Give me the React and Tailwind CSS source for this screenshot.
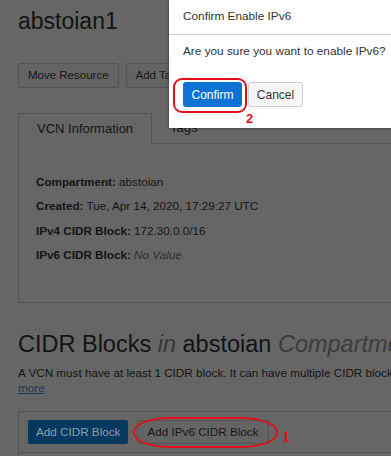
export default function App() {
  const font = "font-['Liberation_Sans',Arial,Helvetica,sans-serif]";
  const btn = "h-[25px] px-[9px] border border-[#535353] rounded-[2px] bg-[#646464] text-[11.5px] text-[#161616]";
  return (
    <div className={`relative w-[391px] h-[456px] overflow-hidden bg-[#666666] text-[#151515] ${font}`}>
      {/* Page, dimmed behind the dialog */}
      <div className="w-[640px] px-[18px]">
        <h1 className="pt-[7px] text-[23px] leading-[28px] font-normal text-[#131313]">abstoian1</h1>

        <div className="mt-[28px] flex gap-[7px]">
          <button className={btn}>Move Resource</button>
          <button className={btn}>Add Tags</button>
          <button className={btn}>Terminate</button>
        </div>

        {/* Tabs */}
        <div className="mt-[25px] flex">
          <div className="h-[31px] px-[18px] flex items-center border border-b-0 border-[#535353] text-[13px]">
            VCN Information
          </div>
          <div className="flex-1 flex border-b border-[#535353]">
            <div className="h-[30px] px-[18px] flex items-center text-[13px]">Tags</div>
          </div>
        </div>
        <div className="border border-t-0 border-[#535353] pt-[26px] pb-[35px] px-[17px] text-[11.7px] leading-[24.3px]">
          <div><b>Compartment:</b> abstoian</div>
          <div><b>Created:</b> Tue, Apr 14, 2020, 17:29:27 UTC</div>
          <div><b>IPv4 CIDR Block:</b> 172.30.0.0/16</div>
          <div><b>IPv6 CIDR Block:</b> <i className="text-[#2e2e2e]">No Value</i></div>
        </div>

        <h2 className="mt-[27px] text-[23.5px] leading-[28px] font-normal whitespace-nowrap text-[#131313]">
          CIDR Blocks <i className="text-[#363636]">in</i> abstoian <i className="text-[#3c3c3c]">Compartment</i>
        </h2>
        <p className="mt-[7px] w-[436px] text-[11.7px] leading-[15px]">
          A VCN must have at least 1 CIDR block. It can have multiple CIDR blocks. Learn{" "}
          <a className="underline text-[#1d3a55]">more</a>
        </p>

        <div className="mt-[16px] border border-[#535353]">
          <div className="flex gap-[9px] px-[9px] py-[8px] border-b border-[#535353]">
            <button className="h-[24px] px-[8px] rounded-[2px] bg-[#053960] text-[#909eab] text-[11.7px]">
              Add CIDR Block
            </button>
            <button className="h-[24px] px-[9px] border border-[#535353] rounded-[2px] bg-[#646464] text-[11.7px] text-[#161616]">
              Add IPv6 CIDR Block
            </button>
          </div>
          <div className="h-[40px]"></div>
        </div>
      </div>

      {/* Modal */}
      <div className="absolute left-[169px] top-0 w-[300px] bg-white shadow-[0_0_3px_rgba(0,0,0,0.5)] text-[#333]">
        <div className="h-[35px] flex items-center px-[14px] border-b border-[#cfcfcf] text-[11.8px]">
          Confirm Enable IPv6
        </div>
        <div className="px-[14px] pt-[8px] pb-[21px]">
          <p className="text-[11.8px] leading-[16px]">Are you sure you want to enable IPv6?</p>
          <div className="mt-[23px] flex gap-[6px]">
            <button className="h-[25px] w-[59px] rounded-[3px] bg-[#0d72d3] text-white text-[12px]">
              Confirm
            </button>
            <button className="h-[25px] w-[55px] rounded-[3px] border border-[#cdcdcd] bg-[#f6f6f6] text-[12px] text-[#333]">
              Cancel
            </button>
          </div>
        </div>
      </div>

      {/* Annotations */}
      <div className="absolute left-[173px] top-[78px] w-[74px] h-[35px] rounded-[9px] border-2 border-[#e3101b]"></div>
      <div className="absolute left-[246px] top-[111px] text-[13px] leading-[16px] font-bold text-[#e3101b]">2</div>
      <div className="absolute left-[133px] top-[417px] w-[145px] h-[31px] rounded-[36px/15px] border-2 border-[#e3101b]"></div>
      <div className="absolute left-[282px] top-[428px] text-[16px] leading-[18px] font-bold text-[#e3101b] font-['Liberation_Serif',serif]">1</div>
    </div>
  );
}
